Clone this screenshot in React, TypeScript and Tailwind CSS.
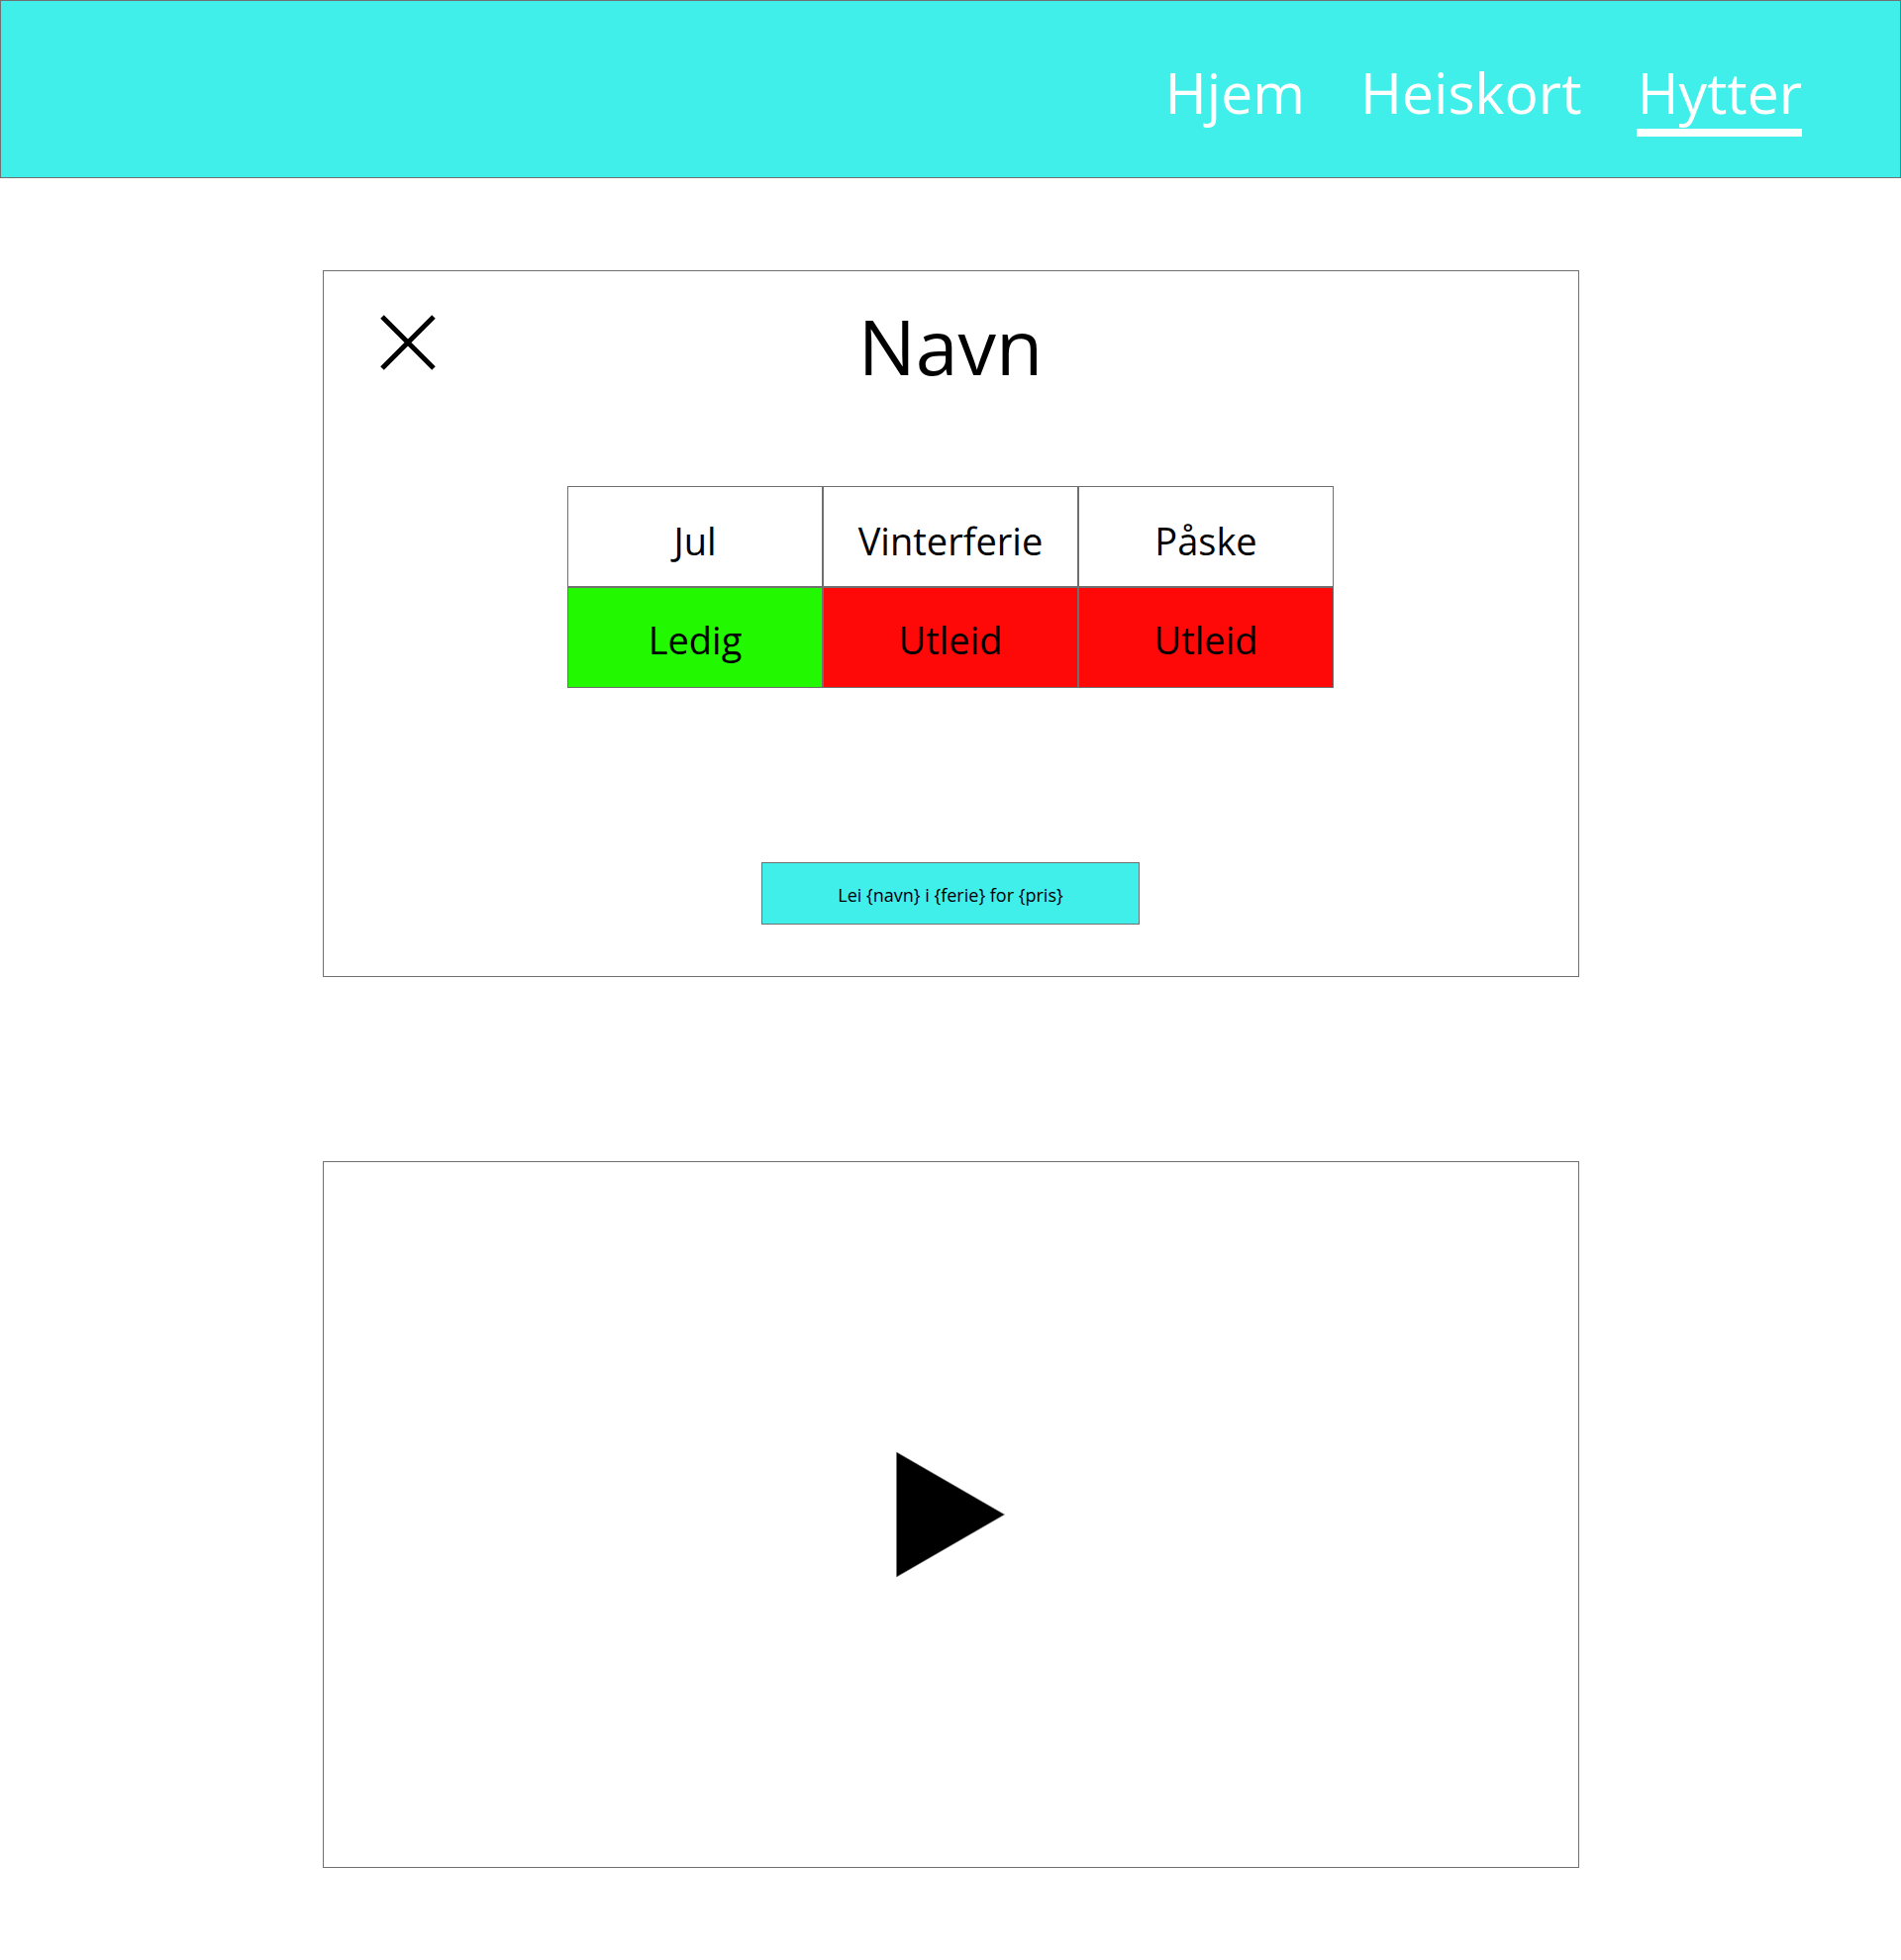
const periods = [
  { name: 'Jul', free: true },
  { name: 'Vinterferie', free: false },
  { name: 'Påske', free: false },
];

const cell = 'h-[102px] border border-[#707070] p-0 text-center align-middle font-normal';

export default function App() {
  return (
    <div className="min-h-screen bg-white pb-[93px] font-['Open_Sans','Noto_Sans',sans-serif] text-black">
      <header className="border border-[#707070] bg-[#40efe9] pt-14 pr-[99px] pb-[41px]">
        <nav className="flex justify-end gap-14 text-[57px] leading-[73px] text-white">
          <a href="#hjem" className="border-b-8 border-transparent">Hjem</a>
          <a href="#heiskort" className="border-b-8 border-transparent">Heiskort</a>
          <a href="#hytter" aria-current="page" className="border-b-8 border-white">Hytter</a>
        </nav>
      </header>

      <main className="mx-auto mt-[93px] flex w-full max-w-[1269px] flex-col gap-[186px]">
        <section className="flex flex-col items-center border border-[#707070] pb-[52px]">
          <div className="grid w-full grid-cols-[1fr_auto_1fr] items-start px-[57px] pt-[22px]">
            <button type="button" aria-label="Lukk" className="mt-[22px] w-[56px]">
              <svg viewBox="0 0 56 56" className="size-[56px]" stroke="#000" strokeWidth="5">
                <path d="M2 2 54 54M54 2 2 54" />
              </svg>
            </button>
            <h1 className="text-[77px] leading-[108px]">Navn</h1>
          </div>
          <table className="mt-[87px] w-[774px] table-fixed border-separate border-spacing-0 text-[38px] leading-[52px]">
            <thead>
              <tr>
                {periods.map((p) => (
                  <th key={p.name} scope="col" className={`${cell} pt-2`}>{p.name}</th>
                ))}
              </tr>
            </thead>
            <tbody>
              <tr>
                {periods.map((p) => (
                  <td key={p.name} className={p.free ? `${cell} bg-[#22f800] pt-1` : `${cell} bg-[#fe0808] pt-1`}>
                    {p.free ? 'Ledig' : 'Utleid'}
                  </td>
                ))}
              </tr>
            </tbody>
          </table>
          <button type="button" className="mt-44 h-[63px] w-[382px] border border-[#707070] bg-[#40efe9] pt-0.5 text-[18px] leading-7">
            {'Lei {navn} i {ferie} for {pris}'}
          </button>
        </section>

        <section className="flex h-[714px] items-center justify-center border border-[#707070]">
          <button type="button" aria-label="Spill av">
            <svg viewBox="0 0 110 128" className="h-[128px] w-[110px]">
              <path d="M.5 1 109.5 64 .5 127Z" fill="#000" stroke="#707070" strokeWidth=".6" />
            </svg>
          </button>
        </section>
      </main>
    </div>
  );
}
